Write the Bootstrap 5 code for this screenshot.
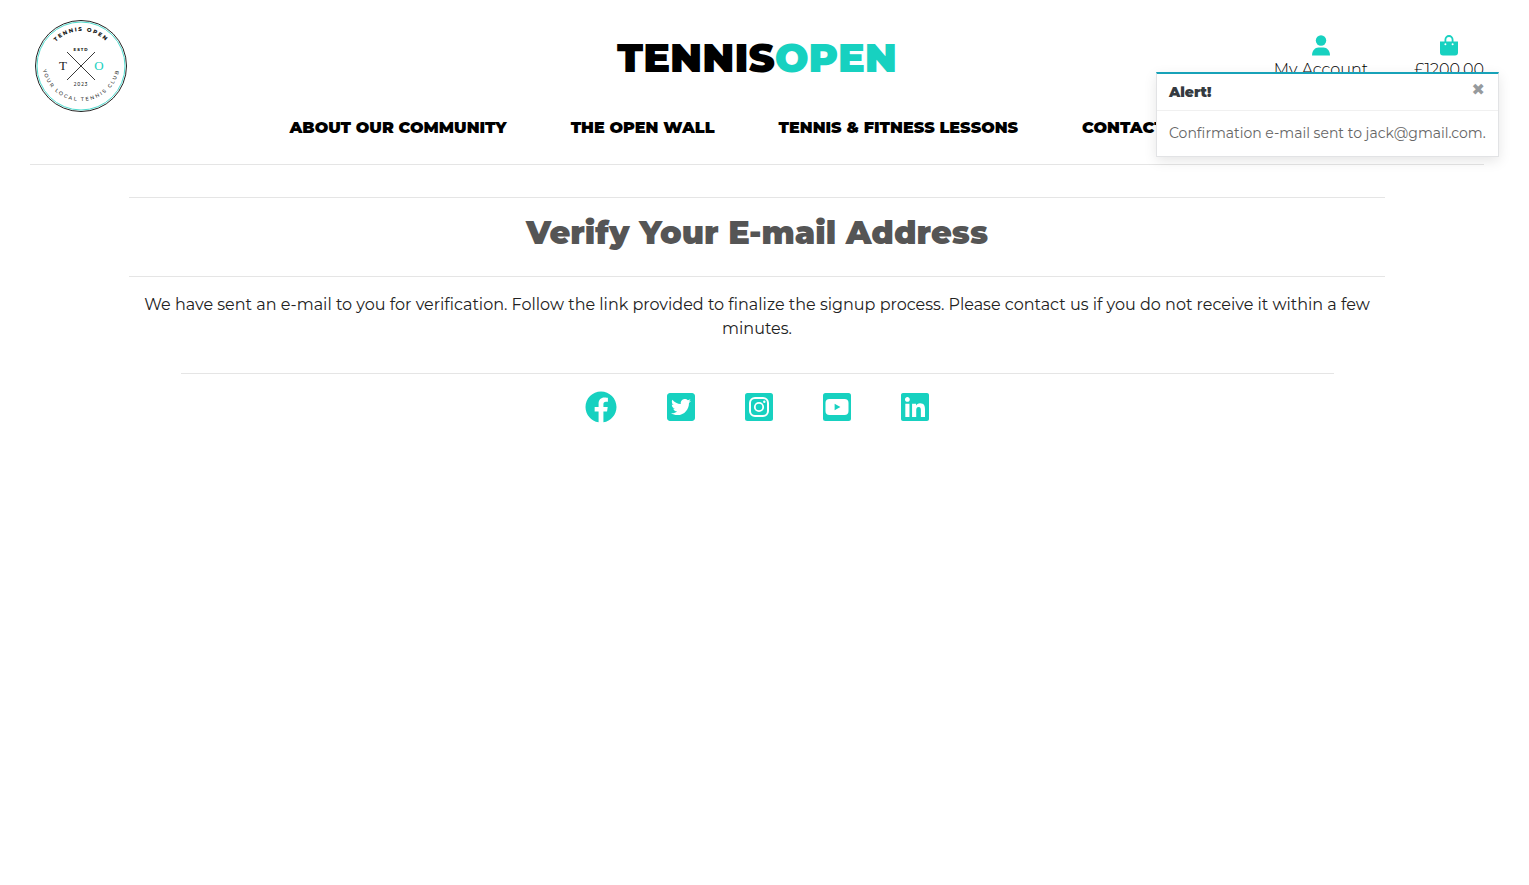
<!DOCTYPE html>
<html lang="en">
<head>
<meta charset="utf-8">
<meta name="viewport" content="width=device-width, initial-scale=1">
<title>Tennis Open - Verify Your E-mail Address</title>
<link href="https://cdn.jsdelivr.net/npm/bootstrap@5.3.0/dist/css/bootstrap.min.css" rel="stylesheet">
<style>
  :root { --to-teal: #17d1c0; --to-line: #e5e5e5; }
  body { font-family: Montserrat, Inter, sans-serif; font-weight: 300; font-size: 16px; line-height: 24px; color: #000; padding-right: 15px; }
  hr { margin: 0; border-top: 1px solid var(--to-line); opacity: 1; }
  a { color: #000; text-decoration: none; }
  .teal { color: var(--to-teal); }
  .site-head { padding: 20px 30px 0; }
  .crest { width: 102px; height: 92px; }
  .brand-name { font-size: 40px; font-weight: 900; line-height: 48px; margin-top: 14px; }
  .tools { gap: 46px; margin-top: 15px; }
  .tools svg { height: 21px; display: block; margin: 0 auto 2px; }
  .site-nav { gap: 64px; font-weight: 900; padding-right: 32px; margin: 4px 0 24px; }
  .verify { width: 83%; margin-top: 32px; }
  .verify h1 { font-size: 32px; font-weight: 900; line-height: 40px; color: #555; margin: 15px 0 23px; }
  .verify p { margin: 16px 0 0; padding: 0 14px; font-weight: 400; color: #222; }
  .site-foot { width: 1153px; max-width: 90%; margin-top: 32px; }
  .social { gap: 50px; margin-top: 17px; }
  .social svg { height: 32px; display: block; }
  .notice { position: absolute; top: 72px; right: 30px; z-index: 10; width: 343px; background: #fff; border: 1px solid #e2e3e5; border-top: 2px solid #17a2b8; box-shadow: 0 4px 12px rgba(0,0,0,.1); font-size: 14px; font-weight: 400; color: #666; }
  .notice-top { padding: 6px 12px; border-bottom: 1px solid #f0f0f0; color: #343a40; }
  .notice-top strong { font-weight: 900; }
  .notice-top button { border: 0; background: none; padding: 0; margin-right: 1px; line-height: 20px; font-size: 16px; font-family: "DejaVu Sans", sans-serif; color: #969a9d; }
  .notice-text { padding: 10px 12px 11px; white-space: nowrap; }
</style>
</head>
<body>
<header class="site-head">
  <div class="row g-0 align-items-start">
    <div class="col">
      <a href="#" class="d-block" aria-label="Home">
        <svg class="crest d-block" viewBox="-51 -46 102 92" overflow="visible">
          <defs>
            <path id="arcTop" d="M-35 0A35 35 0 0 1 35 0"/>
            <path id="arcLow" d="M-39 -4A39 39 0 1 0 39 -4"/>
          </defs>
          <circle r="45.5" fill="#fff" stroke="#222"/>
          <circle r="44" fill="none" stroke="#4fdccf"/>
          <path d="M-14 -14L14 14M14 -14L-14 14" stroke="#222" stroke-width=".9"/>
          <g text-anchor="middle" font-family="Montserrat, sans-serif" fill="#222">
            <text font-size="5.500" font-weight="800" letter-spacing="1.500"><textPath href="#arcTop" startOffset="50%">TENNIS OPEN</textPath></text>
            <text font-size="5" font-weight="500" letter-spacing="1.700"><textPath href="#arcLow" startOffset="50%">YOUR LOCAL TENNIS CLUB</textPath></text>
            <text y="-15" font-size="4" font-weight="800" letter-spacing="1">ESTD</text>
            <text y="20" font-size="4.500" font-weight="500" letter-spacing="1">2023</text>
          </g>
          <g text-anchor="middle" font-family="Liberation Serif, serif" font-size="13">
            <text x="-18" y="4" fill="#222">T</text>
            <text x="18" y="4" fill="#17d1c0">O</text>
          </g>
        </svg>
      </a>
    </div>
    <div class="col-auto"><a href="#" class="brand-name d-block">TENNIS<span class="teal">OPEN</span></a></div>
    <div class="col d-flex justify-content-end tools text-center">
      <a href="#"><svg class="teal" viewBox="0 0 18 21" fill="currentColor"><circle cx="9" cy="5.500" r="5.200"/><path d="M0 20.500C0 15.500 3 12.500 6.500 12.500H11.500C15 12.500 18 15.500 18 20.500Z"/></svg>My Account</a>
      <a href="#"><svg class="teal" viewBox="0 0 18 21"><path fill="currentColor" d="M0 6.500H18V17.500A3 3 0 0 1 15 20.500H3A3 3 0 0 1 0 17.500Z"/><path d="M5.400 9V4.800A3.600 3.800 0 0 1 12.600 4.800V9" fill="none" stroke="currentColor" stroke-width="1.800"/><g fill="#fff"><circle cx="5.400" cy="9.300" r="1"/><circle cx="12.600" cy="9.300" r="1"/></g></svg>£1200.00</a>
    </div>
  </div>
  <nav class="d-flex justify-content-center site-nav">
    <a href="#">ABOUT OUR COMMUNITY</a>
    <a href="#">THE OPEN WALL</a>
    <a href="#">TENNIS &amp; FITNESS LESSONS</a>
    <a href="#">CONTACT US</a>
  </nav>
  <hr>
</header>

<div class="notice" role="alert">
  <div class="notice-top d-flex justify-content-between align-items-start">
    <strong>Alert!</strong>
    <button type="button" aria-label="Close">✖</button>
  </div>
  <div class="notice-text">Confirmation e-mail sent to jack@gmail.com.</div>
</div>

<main class="verify mx-auto text-center">
  <hr>
  <h1>Verify Your E-mail Address</h1>
  <hr>
  <p>We have sent an e-mail to you for verification. Follow the link provided to finalize the signup process. Please contact us if you do not receive it within a few minutes.</p>
</main>

<footer class="site-foot mx-auto">
  <hr>
  <div class="social d-flex justify-content-center teal">
    <a class="teal" href="#" aria-label="Facebook"><svg viewBox="0 0 512 512" fill="currentColor"><path d="M504 256C504 119 393 8 256 8S8 119 8 256c0 123.780 90.690 226.380 209.250 245V327.690h-63V256h63v-54.640c0-62.150 37-96.480 93.670-96.480 27.140 0 55.520 4.840 55.520 4.840v61h-31.280c-30.800 0-40.410 19.120-40.410 38.730V256h68.780l-11 71.690h-57.780V501C413.310 482.380 504 379.780 504 256z"/></svg></a>
    <a class="teal" href="#" aria-label="Twitter"><svg viewBox="0 0 448 512" fill="currentColor"><path d="M400 32H48C21.500 32 0 53.500 0 80v352c0 26.500 21.500 48 48 48h352c26.500 0 48-21.500 48-48V80c0-26.500-21.500-48-48-48zm-48.900 158.800c.2 2.800.2 5.700.2 8.500 0 86.700-66 186.600-186.600 186.600-37.200 0-71.700-10.800-100.700-29.400 5.300.6 10.400.8 15.800.8 30.700 0 58.900-10.400 81.400-28-28.800-.6-53-19.500-61.300-45.500 10.100 1.500 19.200 1.500 29.600-1.200-30-6.100-52.500-32.500-52.500-64.400v-.8c8.700 4.900 18.900 7.900 29.600 8.300a65.447 65.447 0 0 1-29.200-54.600c0-12.200 3.200-23.400 8.900-33.100 32.300 39.800 80.800 65.800 135.200 68.600-9.300-44.500 24-80.600 64-80.600 18.900 0 35.900 7.900 47.900 20.700 14.800-2.800 29-8.300 41.600-15.800-4.900 15.200-15.200 28-28.800 36.100 13.200-1.400 26-5.100 37.800-10.200-8.900 13.100-20.100 24.700-32.900 34z"/></svg></a>
    <a class="teal" href="#" aria-label="Instagram"><svg viewBox="0 0 28 32"><rect y="2" width="28" height="28" rx="2.500" fill="currentColor"/><rect x="5" y="7" width="18" height="18" rx="5" fill="none" stroke="#fff" stroke-width="2"/><circle cx="14" cy="16" r="4.200" fill="none" stroke="#fff" stroke-width="1.800"/><circle cx="19.300" cy="10.700" r="1.200" fill="#fff"/></svg></a>
    <a class="teal" href="#" aria-label="YouTube"><svg viewBox="0 0 28 32"><rect y="2" width="28" height="28" rx="2.500" fill="currentColor"/><rect x="2.500" y="8" width="23" height="16" rx="4" fill="#fff"/><path d="M11.600 12.700V19.300L17.400 16Z" fill="currentColor"/></svg></a>
    <a class="teal" href="#" aria-label="LinkedIn"><svg viewBox="0 0 448 512" fill="currentColor"><path d="M416 32H31.900C14.300 32 0 46.500 0 64.300v383.400C0 465.500 14.300 480 31.900 480H416c17.600 0 32-14.500 32-32.300V64.300c0-17.800-14.400-32.300-32-32.300zM135.400 416H69V202.200h66.500V416zm-33.200-243c-21.300 0-38.500-17.300-38.500-38.500S80.900 96 102.200 96c21.200 0 38.500 17.300 38.500 38.500 0 21.300-17.200 38.500-38.500 38.500zm282.100 243h-66.400V312c0-24.800-.5-56.700-34.500-56.700-34.600 0-39.900 27-39.900 54.900V416h-66.400V202.200h63.700v29.200h.9c8.900-16.800 30.600-34.500 62.900-34.500 67.200 0 79.700 44.300 79.700 101.900V416z"/></svg></a>
  </div>
</footer>
<script src="https://cdn.jsdelivr.net/npm/bootstrap@5.3.0/dist/js/bootstrap.bundle.min.js"></script>
</body>
</html>
